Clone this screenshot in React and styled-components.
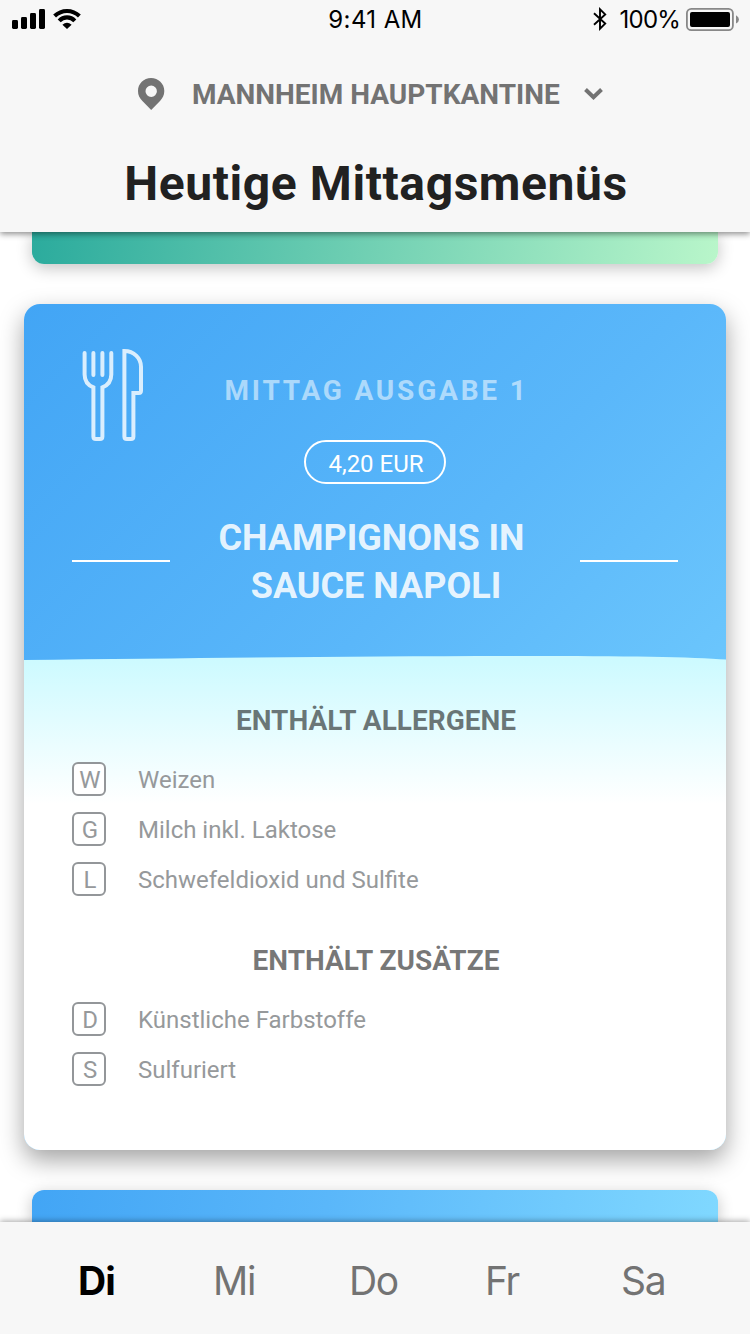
import React from "react";
import styled, { createGlobalStyle } from "styled-components";

const GlobalStyle = createGlobalStyle`
  * { box-sizing: border-box; }
  body { margin: 0; background: #fff; font-family: Roboto, sans-serif; }
  h1, h2, h3, p, ul { margin: 0; padding: 0; }
  svg { display: block; overflow: visible; }
`;

const Screen = styled.div`
  width: 750px;
  height: 1334px;
  display: flex;
  flex-direction: column;
  overflow: hidden;
  background: #fff;
`;

const Header = styled.header`
  position: relative;
  z-index: 1;
  height: 232px;
  flex: none;
  background: #f7f7f7;
  box-shadow: 0 2px 6px rgba(0, 0, 0, 0.45);
`;

const StatusBar = styled.div`
  height: 38px;
  display: grid;
  grid-template-columns: 1fr auto 1fr;
  align-items: center;
  padding: 0 11px 0 12px;
  font: 400 24px/36px Inter, sans-serif;
  color: #000;
`;

const StatusGroup = styled.div`
  display: flex;
  align-items: center;
  justify-content: ${(p) => (p.$end ? "flex-end" : "flex-start")};
  gap: ${(p) => p.$gap}px;
`;

const StatusText = styled.span`
  padding-top: 2px;
  letter-spacing: ${(p) => p.$spacing || 0}px;
`;

const Location = styled.div`
  height: 108px;
  margin-top: 2px;
  padding-left: 138px;
  display: flex;
  align-items: center;
  color: #737373;
`;

const LocationName = styled.span`
  width: 368px;
  margin: 0 24px 0 28px;
  padding-top: 2px;
  font-size: 28px;
  font-weight: 700;
  line-height: 32px;
  white-space: nowrap;
`;

const PageTitle = styled.h1`
  padding: 8px 0 0 2px;
  text-align: center;
  font-size: 48px;
  font-weight: 700;
  line-height: 56px;
  letter-spacing: 0.58px;
  color: #212121;
`;

const Feed = styled.main`
  flex: 1;
  min-height: 0;
  display: flex;
  flex-direction: column;
  align-items: center;
  gap: 40px;
`;

const PeekCard = styled.div`
  width: 686px;
  height: 32px;
  flex: none;
  border-radius: ${(p) => (p.$bottom ? "12px 12px 0 0" : "0 0 12px 12px")};
  background: linear-gradient(100deg, ${(p) => p.$stops});
  box-shadow: 0 4px 16px rgba(0, 0, 0, 0.24);
`;

const Card = styled.article`
  width: 702px;
  height: 846px;
  flex: none;
  display: flex;
  flex-direction: column;
  overflow: hidden;
  border-radius: 16px;
  background: linear-gradient(135deg, #42a5f5, #5ab7fa 43%, #80d8ff);
`;

const CardShadow = styled.div`
  border-radius: 16px;
  box-shadow: 0 10px 24px rgba(0, 0, 0, 0.36);
`;

const Hero = styled.div`
  height: 352px;
  flex: none;
  padding: 0 48px;
  display: grid;
  grid-template-columns: 98px 1fr 98px;
  grid-template-rows: 136px 44px 172px;
  justify-items: center;
`;

const Cutlery = styled.svg`
  justify-self: start;
  margin: 45px 0 0 10px;
`;

const Counter = styled.h2`
  padding: 71px 0 0 3px;
  font-size: 28px;
  font-weight: 700;
  line-height: 32px;
  letter-spacing: 2.8px;
  white-space: nowrap;
  color: rgba(255, 255, 255, 0.54);
`;

const Price = styled.span`
  grid-column: 2;
  width: 142px;
  height: 44px;
  padding-left: 2px;
  border: 2px solid #fff;
  border-radius: 22px;
  font-size: 24px;
  line-height: 44px;
  text-align: center;
  color: #fff;
`;

const Rule = styled.span`
  width: 98px;
  height: 2px;
  margin-top: 76px;
  background: #fff;
`;

const Dish = styled.h3`
  padding: 30px 0 0 2px;
  font-size: 36px;
  font-weight: 700;
  line-height: 48px;
  text-align: center;
  white-space: pre;
  color: rgba(255, 255, 255, 0.87);
`;

const Wave = styled.svg`
  flex: none;
`;

const Details = styled.div`
  flex: 1;
  padding: 45px 48px 0;
  background: linear-gradient(#cdfaff, #fff 144px);
`;

const SectionTitle = styled.h3`
  padding-left: 2px;
  font-size: 28px;
  font-weight: 700;
  line-height: 32px;
  text-align: center;
  color: rgba(0, 0, 0, 0.54);
`;

const Entries = styled.ul`
  padding: 25px 0 49px;
  display: flex;
  flex-direction: column;
  gap: 16px;
  list-style: none;
`;

const Entry = styled.li`
  height: 34px;
  display: flex;
  gap: 32px;
  font-size: 24px;
  line-height: 36px;
  color: #96999b;
`;

const Code = styled.span`
  width: 34px;
  height: 34px;
  padding-left: 2px;
  border: 2px solid #939699;
  border-radius: 6px;
  background: #fff;
  line-height: 32px;
  text-align: center;
`;

const TabBar = styled.nav`
  position: relative;
  z-index: 1;
  height: 112px;
  flex: none;
  padding: 4px 0 0 77px;
  display: grid;
  grid-template-columns: repeat(5, 136px);
  align-items: center;
  background: #f7f7f7;
  box-shadow: 0 -1px 6px rgba(0, 0, 0, 0.35);
`;

const Tab = styled.span`
  padding-left: ${(p) => (p.$active ? 1 : 0)}px;
  font-family: Inter, sans-serif;
  font-size: 39px;
  letter-spacing: ${(p) => (p.$active ? -0.8 : -1.3)}px;
  font-weight: ${(p) => (p.$active ? 700 : 400)};
  color: ${(p) => (p.$active ? "#000" : "#737373")};
`;

const allergens = [
  ["W", "Weizen"],
  ["G", "Milch inkl. Laktose"],
  ["L", "Schwefeldioxid und Sulfite"],
];

const additives = [
  ["D", "Künstliche Farbstoffe"],
  ["S", "Sulfuriert"],
];

const days = ["Di", "Mi", "Do", "Fr", "Sa"];

function Signal() {
  return (
    <svg width="33" height="20" viewBox="0 0 33 20">
      <rect x="0" y="11" width="6" height="9" rx="1.4" />
      <rect x="9" y="8" width="6" height="12" rx="1.4" />
      <rect x="18" y="4" width="6" height="16" rx="1.4" />
      <rect x="27" y="0" width="6" height="20" rx="1.4" />
    </svg>
  );
}

function Wifi() {
  return (
    <svg width="28" height="20" viewBox="0 0 28 20" fill="none" stroke="#000" strokeWidth="4.1">
      <path d="M1.6 7.1 C8.7 .3 19.3 .3 26.4 7.1" />
      <path d="M6.2 11.9 C10.5 7.2 17.5 7.2 21.8 11.9" />
      <path d="M9.4 15.8 Q14 11.8 18.6 15.8 L14 20 Z" fill="#000" stroke="none" />
    </svg>
  );
}

function Bluetooth() {
  return (
    <svg width="14" height="24" viewBox="0 0 14 24" fill="none" stroke="#000" strokeWidth="1.9">
      <path d="M1 6.3 L12.2 16.6 L7 21.7 V2.3 L12.2 7.4 L1 17.7" />
    </svg>
  );
}

function Battery() {
  return (
    <svg width="53" height="23" viewBox="0 0 53 23">
      <rect x=".9" y=".9" width="46" height="21.2" rx="4.4" fill="none" stroke="#888" strokeWidth="1.8" />
      <rect x="4" y="4" width="40" height="15" rx="2" />
      <path d="M50 7.3 Q53 9 53 11.4 Q53 14 50 15.6 Z" fill="#888" />
    </svg>
  );
}

function Pin() {
  return (
    <svg width="26" height="32" viewBox="0 0 26 32">
      <path
        fill="#737373"
        fillRule="evenodd"
        d="M13 0 C5.8 0 0 5.7 0 12.9 C0 17 1.6 20 4.4 22.9 L13.2 32 L22 22.9 C24.6 20.1 26.3 17 26.3 12.9 C26.3 5.7 20.4 0 13 0 Z M13.2 7.5 A5.7 5.7 0 1 1 13.2 18.9 A5.7 5.7 0 1 1 13.2 7.5 Z"
      />
    </svg>
  );
}

function Chevron() {
  return (
    <svg width="19" height="12" viewBox="0 0 19 12" fill="none" stroke="#737373" strokeWidth="4">
      <path d="M1.5 1.5 L9.5 9.3 L17.5 1.5" />
    </svg>
  );
}

function CutleryIcon() {
  return (
    <Cutlery
      width="62"
      height="92"
      viewBox="82 349 62 92"
      fill="none"
      stroke="#fff"
      strokeOpacity=".8"
      strokeWidth="4"
      strokeLinecap="round"
    >
      <path d="M84.6 353 V374.5 C84.6 380.5 88 385.3 93.4 387.4 V436.5 Q93.4 439 95.9 439 H99.9 Q102.4 439 102.4 436.5 V387.4 C107.8 385.3 111.3 380.5 111.3 374.5 V353" />
      <path d="M93.4 353 V375 M102.4 353 V375" />
      <path
        strokeLinecap="butt"
        d="M124.4 351 C133.8 351 141 358 141 366.8 V390.7 Q141 392.9 138.8 392.9 H133.4 V436.5 Q133.4 439 130.9 439 H126.9 Q124.4 439 124.4 436.5 Z"
      />
    </Cutlery>
  );
}

function EntryList({ items }) {
  return (
    <Entries>
      {items.map(([code, name]) => (
        <Entry key={code}>
          <Code>{code}</Code>
          <span>{name}</span>
        </Entry>
      ))}
    </Entries>
  );
}

export default function App() {
  return (
    <>
      <GlobalStyle />
      <Screen>
        <Header>
          <StatusBar>
            <StatusGroup $gap={8}>
              <Signal />
              <Wifi />
            </StatusGroup>
            <StatusText $spacing={0.4}>9:41 AM</StatusText>
            <StatusGroup $end $gap={6}>
              <StatusGroup $gap={13}>
                <Bluetooth />
                <StatusText $spacing={-0.8}>100%</StatusText>
              </StatusGroup>
              <Battery />
            </StatusGroup>
          </StatusBar>
          <Location>
            <Pin />
            <LocationName>MANNHEIM HAUPTKANTINE</LocationName>
            <Chevron />
          </Location>
          <PageTitle>Heutige Mittagsmenüs</PageTitle>
        </Header>

        <Feed>
          <PeekCard $stops="#2bab9d, #b9f6ca" />
          <CardShadow>
            <Card>
              <Hero>
                <CutleryIcon />
                <Counter>MITTAG AUSGABE 1</Counter>
                <span />
                <Price>4,20 EUR</Price>
                <span />
                <Rule />
                <Dish>{"CHAMPIGNONS IN \nSAUCE NAPOLI"}</Dish>
                <Rule />
              </Hero>
              <Wave width="702" height="4" viewBox="0 0 702 4">
                <path fill="#cdfaff" d="M0 4 C180 2 330 0 500 0 C600 0 670 1 702 3.6 V4.5 H0 Z" />
              </Wave>
              <Details>
                <SectionTitle>ENTHÄLT ALLERGENE</SectionTitle>
                <EntryList items={allergens} />
                <SectionTitle>ENTHÄLT ZUSÄTZE</SectionTitle>
                <EntryList items={additives} />
              </Details>
            </Card>
          </CardShadow>
          <PeekCard $bottom $stops="#42a5f5, #5ab7fa 43%, #80d8ff" />
        </Feed>

        <TabBar>
          {days.map((day, i) => (
            <Tab key={day} $active={i === 0}>
              {day}
            </Tab>
          ))}
        </TabBar>
      </Screen>
    </>
  );
}
